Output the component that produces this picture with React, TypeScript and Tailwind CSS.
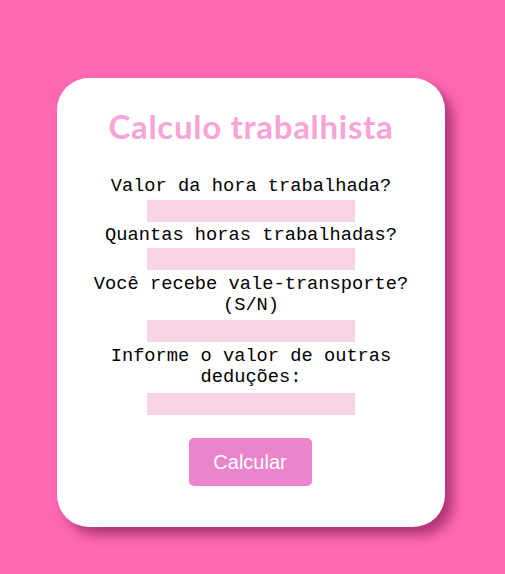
export default function App() {
  const label = "block text-center text-[18.72px] leading-[21px] text-black";
  const mono = { fontFamily: '"Liberation Mono", "Courier New", monospace' };
  const input = "block mx-auto w-[208px] h-[22px] bg-[#f8d3e6] border-0 outline-none";
  return (
    <div className="min-h-[574px] bg-[#ff69b4] pt-[78px] pb-[40px]">
      <div className="ml-[57px] w-[388px] h-[449px] bg-white rounded-[32px] shadow-[8px_8px_12px_rgba(120,20,70,0.6)] px-[20px] pt-[28px] flex flex-col items-center">
        <h1
          className="text-[33px] leading-[40px] font-bold tracking-[0.7px] text-[#f9a3d8] text-center"
          style={{ fontFamily: 'Lato, "Noto Sans", sans-serif' }}
        >
          Calculo trabalhista
        </h1>
        <div className="w-full flex flex-col mt-[30px]" style={mono}>
          <label className={label}>Valor da hora trabalhada?</label>
          <input className={`${input} mt-[3px]`} />
          <label className={`${label} mt-[3px]`}>Quantas horas trabalhadas?</label>
          <input className={`${input} mt-[2px]`} />
          <label className={`${label} mt-[4px]`}>Você recebe vale-transporte? (S/N)</label>
          <input className={`${input} mt-[4px]`} />
          <label className={`${label} mt-[4px]`}>Informe o valor de outras deduções:</label>
          <input className={`${input} mt-[5px]`} />
        </div>
        <button
          className="mt-[23px] mr-[2px] w-[123px] h-[48px] rounded-[5px] bg-[#eb84cb] text-white text-[20px]"
          style={{ fontFamily: '"Liberation Sans", Arial, sans-serif' }}
        >
          Calcular
        </button>
      </div>
    </div>
  );
}
